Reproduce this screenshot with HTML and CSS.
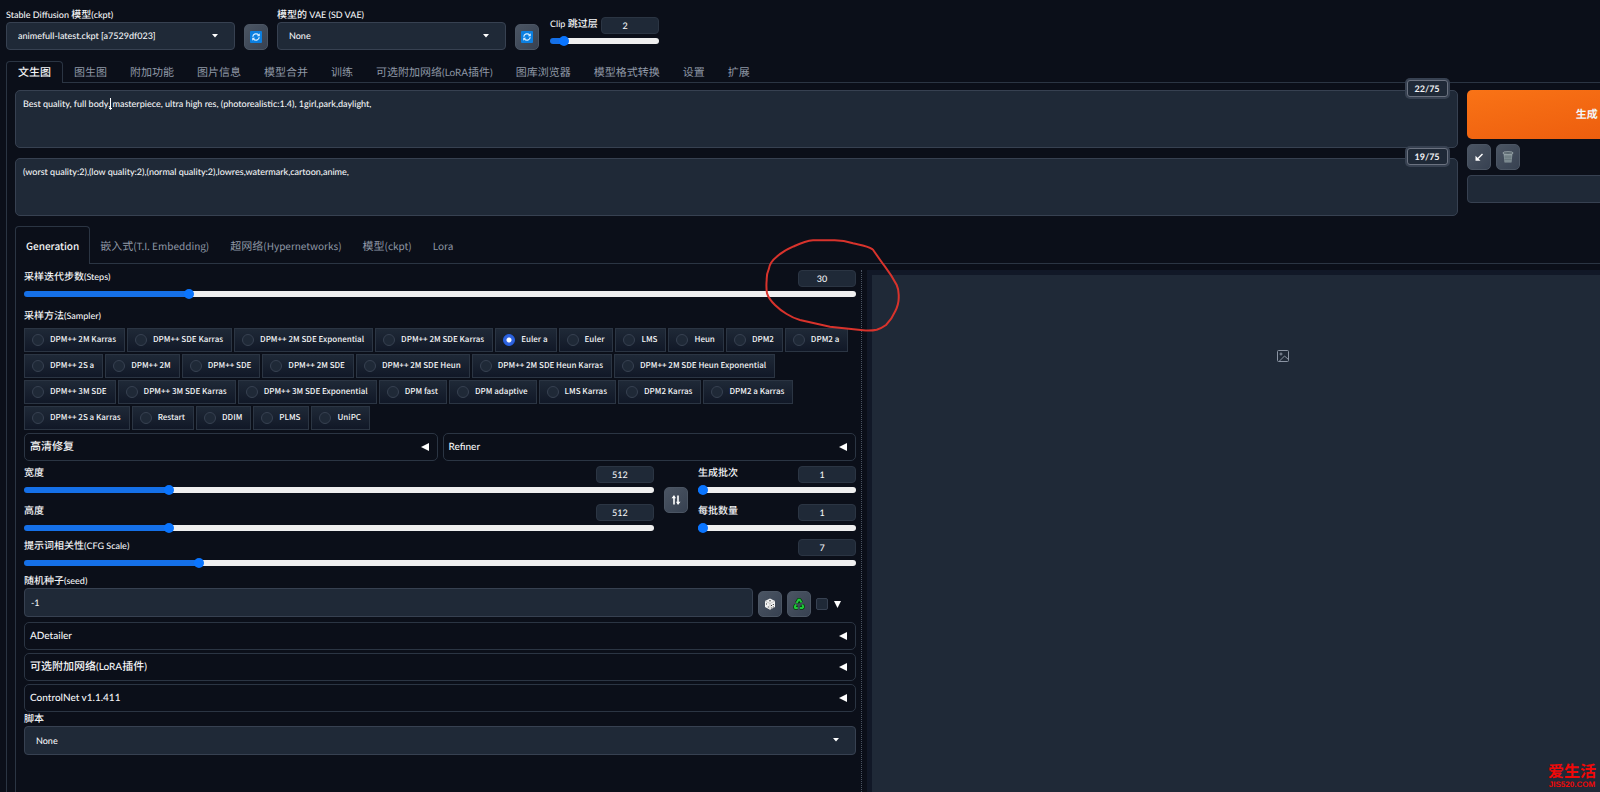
FILE: index.html
```
<!DOCTYPE html>
<html lang="zh-CN">
<head>
<meta charset="utf-8">
<title>Stable Diffusion</title>
<link rel="stylesheet" href="styles.css">
</head>
<body>
<svg class="sprites" aria-hidden="true">
  <symbol id="refresh" viewBox="0 0 12 12"><rect width="12" height="12" rx="1" fill="#0b7fe0"/><path d="M2.800 5.800A3.300 3.300 0 0 1 8.600 4M9.200 6.200A3.300 3.300 0 0 1 3.400 8" fill="none" stroke="#d5edff" stroke-width="1.300"/><path d="M9.800 2.200v3H6.800zM2.200 9.800v-3h3z" fill="#d5edff"/></symbol>
  <symbol id="caret" viewBox="0 0 6 4"><path d="M0 0h6L3 3.400z" fill="#fff"/></symbol>
  <symbol id="left" viewBox="0 0 8 8"><path d="M8 0v8L0 4z" fill="#fff"/></symbol>
</svg>
<div class="app">
  <header class="quick">
    <div class="field quick-select">
      <label for="ckpt"><span>Stable Diffusion </span>模型<span>(ckpt)</span></label>
      <div class="select"><select id="ckpt"><option>animefull-latest.ckpt [a7529df023]</option></select><svg><use href="#caret"/></svg></div>
    </div>
    <button class="tool" aria-label="刷新模型"><svg class="icon"><use href="#refresh"/></svg></button>
    <div class="field quick-select">
      <label for="vae">模型的<span> VAE (SD VAE)</span></label>
      <div class="select"><select id="vae"><option>None</option></select><svg><use href="#caret"/></svg></div>
    </div>
    <button class="tool" aria-label="刷新 VAE"><svg class="icon"><use href="#refresh"/></svg></button>
    <div class="slider clip">
      <div class="slider-head"><label for="clip"><span>Clip </span>跳过层</label><input class="num" aria-label="Clip 跳过层数值" value="2"></div>
      <input id="clip" type="range" min="1" max="12" value="2" style="--fill:9.1%">
    </div>
  </header>

  <nav class="tabs">
    <button class="tab active">文生图</button><button class="tab">图生图</button><button class="tab">附加功能</button><button class="tab">图片信息</button><button class="tab">模型合并</button><button class="tab">训练</button><button class="tab">可选附加网络<span>(LoRA</span>插件<span>)</span></button><button class="tab">图库浏览器</button><button class="tab">模型格式转换</button><button class="tab">设置</button><button class="tab">扩展</button>
  </nav>

  <main class="page">
    <section class="top">
      <div class="prompts">
        <div class="prompt">
          <textarea aria-label="提示词">Best quality, full body, masterpiece, ultra high res, (photorealistic:1.4), 1girl,park,daylight,</textarea>
          <span class="tokens">22/75</span>
          <svg class="ibeam" viewBox="0 0 5 12"><path d="M2.500 0v11M1 10l1.500 1.500L4 10" fill="none" stroke="#fff"/></svg>
        </div>
        <div class="prompt">
          <textarea aria-label="反向提示词">(worst quality:2),(low quality:2),(normal quality:2),lowres,watermark,cartoon,anime,</textarea>
          <span class="tokens">19/75</span>
        </div>
      </div>
      <div class="actions">
        <button class="generate">生成</button>
        <div class="tools">
          <button class="tool" aria-label="读取参数"><svg class="icon" viewBox="0 0 12 12"><path d="M9.500 3 5 7.500" stroke="#fff" stroke-width="1.500"/><path d="M2.500 4.800v5h5z" fill="#fff"/></svg></button>
          <button class="tool" aria-label="清空"><svg class="icon" viewBox="0 0 12 12"><path d="M1.500 2.500h9l-1 9h-7z" fill="#86949a"/><ellipse cx="6" cy="2" rx="5.200" ry="1.400" fill="#55626a" stroke="#a9b4b8" stroke-width=".7"/><path d="M4 4v7M6 4v7M8 4v7M2.300 6h7.400M2.500 8.500h7" stroke="#5b686e" stroke-width=".5"/></svg></button>
        </div>
        <div class="select"><select aria-label="预设样式"><option></option></select></div>
      </div>
    </section>

    <nav class="tabs inner">
      <button class="tab active"><span>Generation</span></button><button class="tab">嵌入式<span>(T.I. Embedding)</span></button><button class="tab">超网络<span>(Hypernetworks)</span></button><button class="tab">模型<span>(ckpt)</span></button><button class="tab"><span>Lora</span></button>
    </nav>

    <section class="panel">
      <div class="settings">
        <div class="slider">
          <div class="slider-head"><label for="steps">采样迭代步数<span>(Steps)</span></label><input class="num" aria-label="步数数值" value="30"></div>
          <input id="steps" type="range" min="1" max="150" value="30" style="--fill:19.5%">
        </div>

        <fieldset class="samplers">
          <legend>采样方法<span>(Sampler)</span></legend>
          <div class="radios">
            <label><input type="radio" name="s">DPM++ 2M Karras</label>
            <label><input type="radio" name="s">DPM++ SDE Karras</label>
            <label><input type="radio" name="s">DPM++ 2M SDE Exponential</label>
            <label><input type="radio" name="s">DPM++ 2M SDE Karras</label>
            <label><input type="radio" name="s" checked>Euler a</label>
            <label><input type="radio" name="s">Euler</label>
            <label><input type="radio" name="s">LMS</label>
            <label><input type="radio" name="s">Heun</label>
            <label><input type="radio" name="s">DPM2</label>
            <label><input type="radio" name="s">DPM2 a</label>
            <label><input type="radio" name="s">DPM++ 2S a</label>
            <label><input type="radio" name="s">DPM++ 2M</label>
            <label><input type="radio" name="s">DPM++ SDE</label>
            <label><input type="radio" name="s">DPM++ 2M SDE</label>
            <label><input type="radio" name="s">DPM++ 2M SDE Heun</label>
            <label><input type="radio" name="s">DPM++ 2M SDE Heun Karras</label>
            <label><input type="radio" name="s">DPM++ 2M SDE Heun Exponential</label>
            <label><input type="radio" name="s">DPM++ 3M SDE</label>
            <label><input type="radio" name="s">DPM++ 3M SDE Karras</label>
            <label><input type="radio" name="s">DPM++ 3M SDE Exponential</label>
            <label><input type="radio" name="s">DPM fast</label>
            <label><input type="radio" name="s">DPM adaptive</label>
            <label><input type="radio" name="s">LMS Karras</label>
            <label><input type="radio" name="s">DPM2 Karras</label>
            <label><input type="radio" name="s">DPM2 a Karras</label>
            <label><input type="radio" name="s">DPM++ 2S a Karras</label>
            <label><input type="radio" name="s">Restart</label>
            <label><input type="radio" name="s">DDIM</label>
            <label><input type="radio" name="s">PLMS</label>
            <label><input type="radio" name="s">UniPC</label>
          </div>
        </fieldset>

        <div class="pair">
          <button class="accordion">高清修复<svg><use href="#left"/></svg></button>
          <button class="accordion"><span>Refiner</span><svg><use href="#left"/></svg></button>
        </div>

        <div class="size">
          <div class="sliders">
            <div class="slider">
              <div class="slider-head"><label for="w">宽度</label><input class="num" aria-label="宽度数值" value="512"></div>
              <input id="w" type="range" min="64" max="2048" value="512" style="--fill:22.6%">
            </div>
            <div class="slider">
              <div class="slider-head"><label for="h">高度</label><input class="num" aria-label="高度数值" value="512"></div>
              <input id="h" type="range" min="64" max="2048" value="512" style="--fill:22.6%">
            </div>
          </div>
          <button class="tool" aria-label="交换宽高"><svg class="icon" viewBox="0 0 12 12"><path d="M4 10.500V3M8 1.500v8" stroke="#fff" stroke-width="1.600"/><path d="M1.500 4.200 4 1l2 3.200zM6 7.800 8 11l2.500-3.200z" fill="#fff"/></svg></button>
          <div class="sliders batch">
            <div class="slider">
              <div class="slider-head"><label for="bc">生成批次</label><input class="num" aria-label="生成批次数值" value="1"></div>
              <input id="bc" type="range" min="1" max="100" value="1" style="--fill:0%">
            </div>
            <div class="slider">
              <div class="slider-head"><label for="bs">每批数量</label><input class="num" aria-label="每批数量数值" value="1"></div>
              <input id="bs" type="range" min="1" max="8" value="1" style="--fill:0%">
            </div>
          </div>
        </div>

        <div class="slider cfg">
          <div class="slider-head"><label for="cfg">提示词相关性<span>(CFG Scale)</span></label><input class="num" aria-label="CFG 数值" value="7"></div>
          <input id="cfg" type="range" min="1" max="30" value="7" style="--fill:20.7%">
        </div>

        <div class="seed">
          <div class="field"><label for="seed">随机种子<span>(seed)</span></label><input id="seed" class="text" value="-1"></div>
          <button class="tool" aria-label="随机"><svg class="icon" viewBox="0 0 12 12"><path d="M6 .5 11 3v6L6 11.700 1 9V3z" fill="#f2f2f2"/><path d="M1 3l5 2.500L11 3M6 5.500v6" fill="none" stroke="#aaa" stroke-width=".6"/><path d="M5.200 2.800h1.600M2.500 5.500v1M4.300 8.500v1M7.500 7v1M9.300 6v1M9.300 8.500v1M7.700 9.500v1" stroke="#333"/></svg></button>
          <button class="tool" aria-label="重用种子"><svg class="icon" viewBox="0 0 12 12"><g fill="none" stroke="#043d0c" stroke-width="3.600" stroke-linejoin="round"><path d="M3.600 5 5.500 1.800h1.200L8.500 4.500M9.300 6.500l1 2.500-1 1H6.800M4.800 10H2.300L1.800 8.800 3 6.600"/></g><g fill="none" stroke="#1fc93a" stroke-width="2"><path d="M3.600 5 5.500 1.800h1.200L8.500 4.500M9.300 6.500l1 2.500-1 1H6.800M4.800 10H2.300L1.800 8.800 3 6.600"/></g></svg></button>
          <label class="extra"><input type="checkbox" aria-label="附加种子选项"><svg viewBox="0 0 8 8"><path d="M0 0h8L4 8z" fill="#fff"/></svg></label>
        </div>

        <div class="stack">
          <button class="accordion"><span>ADetailer</span><svg><use href="#left"/></svg></button>
          <button class="accordion"><em>可选附加网络<span>(LoRA</span>插件<span>)</span></em><svg><use href="#left"/></svg></button>
          <button class="accordion"><span>ControlNet v1.1.411</span><svg><use href="#left"/></svg></button>
        </div>

        <div class="field script">
          <label for="script">脚本</label>
          <div class="select wide"><select id="script"><option>None</option></select><svg><use href="#caret"/></svg></div>
        </div>
      </div>
      <div class="resizer"></div>
      <div class="preview">
        <svg viewBox="0 0 12 12" fill="none" stroke="#8b94a3"><rect x=".5" y=".5" width="11" height="11" rx="1"/><circle cx="4" cy="4" r="1"/><path d="m2.500 11 5-5 4 3.500"/></svg>
      </div>
    </section>
  </main>
</div>

<svg class="mark" viewBox="0 0 140 96"><path d="M109.700 12.300C103 8 97 8 90 6.300Q80 3 70 3.300H50C42 4 36 7 30 9.700Q20 14 13.700 19.700Q7 25 6 31.300Q3.500 37 3.700 43Q3 50 4 56.300Q6 62 12 68Q17 73 23.700 77Q30 81 37 83L67 89.700 100 93.300Q108 94 113.700 92.700Q119 91 123 88Q129 82 132 74.700Q136 67 135.700 59.700Q136 53 133.700 48Q129 39 122 29.700C117 23 113 17 109.700 12.300" fill="none" stroke="#d8332c" stroke-width="2"/></svg>
<div class="watermark"><b>爱生活</b><span>JIS520.COM</span></div>
</body>
</html>
```

FILE: styles.css
```
:root {
  --bg: #0b0f19;
  --field: #1f2937;
  --line: #374151;
  --edge: #2b3543;
  --text: #f3f4f6;
  --muted: #8f98a6;
}

* { box-sizing: border-box; }

html { overflow: hidden; }

body {
  margin: 0;
  overflow: hidden;
  background: var(--bg);
  color: var(--text);
  font: 500 9px/14px Lato, "Noto Sans CJK SC", sans-serif;
  text-rendering: geometricPrecision;
}

button, input, select, textarea {
  margin: 0;
  font: inherit;
  color: inherit;
  text-rendering: inherit;
  outline: none;
}

svg { display: block; }
em { font-style: normal; }
.sprites { position: absolute; width: 0; height: 0; }
label, legend { height: 14px; font-size: 10px; white-space: nowrap; }
label span, legend span { font-size: 9px; }

.app {
  display: flex;
  flex-direction: column;
  width: 107%;
  height: 100vh;
  padding: 8px 5px 0 6px;
}

/* quick settings */
.quick { display: flex; align-items: flex-end; gap: 9px; }
.quick-select { width: 229px; }
.quick .slider { margin: 0 0 4px 2px; }
.field { display: flex; flex-direction: column; }

.select { position: relative; }
.select select {
  display: block;
  width: 100%;
  height: 28px;
  padding: 0 11px;
  border: 1px solid var(--line);
  border-radius: 4px;
  background: var(--field);
  appearance: none;
}
.select svg {
  position: absolute;
  top: 12px;
  right: 17px;
  width: 6px;
  height: 4px;
  pointer-events: none;
}

.tool {
  display: flex;
  flex: none;
  align-items: center;
  justify-content: center;
  width: 24px;
  height: 26px;
  padding: 0;
  border: 1px solid #4b5563;
  border-radius: 5px;
  background: linear-gradient(135deg, #4b5563, #374151);
}
.icon { width: 12px; height: 12px; }

.slider-head { display: flex; justify-content: space-between; height: 17px; }
.num {
  width: 58px;
  height: 17px;
  padding: 0 10px 0 0;
  border: 1px solid var(--edge);
  border-radius: 4px;
  background: var(--field);
  text-align: center;
}
.clip { width: 109px; }

input[type="range"] {
  display: block;
  width: 100%;
  height: 10px;
  margin-top: 2px;
  background: none;
  appearance: none;
}
input[type="range"]::-webkit-slider-runnable-track {
  height: 6px;
  border-radius: 3px;
  background: linear-gradient(to right, #1570e8 calc(5px + var(--fill) * 0.98), #efefef 0);
}
input[type="range"]::-webkit-slider-thumb {
  width: 10px;
  height: 10px;
  margin-top: -2px;
  border-radius: 50%;
  background: #0a75ff;
  appearance: none;
}

/* tabs */
.tabs {
  display: flex;
  margin: 11px -5px 0 0;
  box-shadow: inset 0 -1px var(--edge);
}
.tab {
  height: 22px;
  margin-right: -1px;
  padding: 1px 11px 0;
  border: 1px solid transparent;
  border-bottom: 0;
  background: none;
  color: var(--muted);
  font-size: 11px;
  font-weight: 400;
  white-space: nowrap;
}
.tab span, .accordion span { font-size: 10px; }
.tab.active {
  border-color: var(--edge);
  border-radius: 4px 4px 0 0;
  background: var(--bg);
  color: var(--text);
  font-weight: 500;
}
.inner { margin-top: 10px; }
.inner .tab {
  height: 38px;
  padding: 0 10px;
  font-family: "Noto Sans CJK SC", sans-serif;
}

.page {
  display: flex;
  flex: 1;
  flex-direction: column;
  min-height: 0;
  padding: 7px 0 0 8px;
  border-left: 1px solid var(--edge);
}

/* prompts */
.top { display: flex; gap: 9px; }
.prompts { display: flex; flex: 6; flex-direction: column; gap: 10px; }
.prompt { position: relative; }
.prompt textarea {
  display: block;
  width: 100%;
  height: 58px;
  padding: 6px 7px;
  border: 1px solid var(--line);
  border-radius: 5px;
  background: var(--field);
  resize: none;
}
.tokens {
  position: absolute;
  top: -10px;
  right: 10px;
  padding: 0 7px;
  border: 1px solid #6b7280;
  border-radius: 3px;
  background: var(--field);
  box-shadow: 0 0 0 2px #374151;
  font-weight: 700;
  line-height: 15px;
}
.ibeam { position: absolute; top: 8px; left: 93px; width: 5px; height: 12px; }

.actions { display: flex; flex: 1; flex-direction: column; gap: 5px; }
.generate {
  height: 49px;
  padding-left: 6px;
  border: 0;
  border-radius: 5px;
  background: linear-gradient(to bottom right, #f97316, #ea580c);
  font-size: 11px;
  font-weight: 700;
}
.tools { display: flex; gap: 5px; }

/* generation panel */
.panel {
  display: grid;
  flex: 1;
  grid-template-columns: minmax(0, 1fr) 1px minmax(0, 1fr);
  gap: 5px;
  min-height: 0;
  padding: 6px 8px 0;
  border-left: 1px solid var(--edge);
}
.resizer { border-left: 1px dotted #4b5563; }

.samplers { margin: 10px 0 0; padding: 0; border: 0; }
.samplers legend { padding: 0; margin-bottom: 5px; }
.radios { display: flex; flex-wrap: wrap; gap: 2px; }
.radios label {
  display: flex;
  align-items: center;
  gap: 6px;
  height: 24px;
  padding: 0 8px 0 7px;
  border: 1px solid var(--edge);
  background: linear-gradient(to top, #111827, var(--field));
  font-family: "Noto Sans CJK SC", sans-serif;
  font-size: 8px;
}
.radios input, .extra input {
  width: 12px;
  height: 12px;
  border: 1px solid var(--line);
  border-radius: 50%;
  background: var(--field);
  appearance: none;
}
.radios input:checked {
  border-color: #2563eb;
  background: radial-gradient(circle, #fff 2px, #2f62dd 3px);
}

.pair { display: grid; grid-template-columns: 1fr 1fr; gap: 5px; margin-top: 3px; }
.accordion {
  display: flex;
  align-items: center;
  justify-content: space-between;
  height: 28px;
  padding: 0 8px 0 5px;
  border: 1px solid var(--edge);
  border-radius: 5px;
  background: none;
  font-size: 11px;
}
.accordion svg { width: 8px; height: 8px; }

.size { display: flex; align-items: center; gap: 10px; margin-top: 5px; }
.sliders { display: flex; flex: 1; flex-direction: column; gap: 9px; }
.batch { flex: none; width: 19%; }
.cfg { margin-top: 6px; }

.seed { display: flex; align-items: flex-end; gap: 5px; margin-top: 6px; }
.seed .field { flex: 1; }
.text {
  height: 29px;
  padding: 0 6px;
  border: 1px solid var(--line);
  border-radius: 4px;
  background: var(--field);
}
.extra { display: flex; align-items: center; gap: 6px; width: 40px; height: 26px; }
.extra input { border-radius: 2px; }
.extra svg { width: 7px; height: 7px; }

.stack { display: grid; gap: 3px; margin-top: 5px; }
.wide select { height: 29px; }

.preview {
  border: 5px solid #111827;
  border-bottom: 0;
  background: var(--field);
}
.preview svg { width: 12px; height: 12px; margin: 75px auto 0; }

/* overlays */
.mark { position: absolute; top: 237px; left: 763px; width: 140px; height: 96px; pointer-events: none; }
.watermark {
  position: absolute;
  right: 4px;
  bottom: 3px;
  display: flex;
  flex-direction: column;
  align-items: center;
  color: #f00808;
}
.watermark b { font-size: 16px; line-height: 16px; font-weight: 700; }
.watermark span { font: 700 8px/9px "Liberation Sans", sans-serif; }
```
